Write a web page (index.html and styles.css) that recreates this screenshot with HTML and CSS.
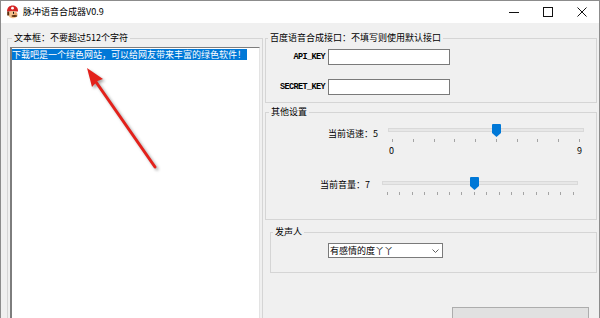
FILE: index.html
```html
<!DOCTYPE html>
<html lang="zh-CN">
<head>
    <meta charset="UTF-8">
    <meta name="viewport" content="width=device-width, initial-scale=1.0">
    <title>脉冲语音合成器V0.9</title>
    <link rel="stylesheet" href="styles.css">
</head>
<body>

    <div class="window">
        <div class="titlebar">
            <svg class="app-icon" viewBox="0 0 13 14">
                <path d="M1 6.5 C1 2.5 3.5 0.5 6.5 0.5 C9.5 0.5 12 2.5 12 5.5 L12 6.5 Z" fill="#d42424"/>
                <circle cx="6.5" cy="3.2" r="1.4" fill="#fff"/>
                <ellipse cx="7" cy="9.6" rx="4.6" ry="3.6" fill="#f4c18c"/>
                <rect x="1.2" y="6.5" width="2" height="4" fill="#5a2d0c"/>
                <ellipse cx="8.4" cy="11" rx="3" ry="1.1" fill="#5a2d0c"/>
                <circle cx="9.6" cy="8.8" r="1.3" fill="#ee9c66"/>
                <rect x="7" y="6.8" width="1" height="2" fill="#111"/>
            </svg>
            <span class="title">脉冲语音合成器V0.9</span>
            <div class="controls">
                <span class="ctl"><svg width="10" height="10"><line x1="0" y1="5.5" x2="10" y2="5.5" stroke="#111"/></svg></span>
                <span class="ctl"><svg width="10" height="10"><rect x="0.5" y="0.5" width="9" height="9" fill="none" stroke="#111"/></svg></span>
                <span class="ctl"><svg width="10" height="10"><path d="M0.5 0.5 L9.5 9.5 M9.5 0.5 L0.5 9.5" stroke="#111"/></svg></span>
            </div>
        </div>

        <div class="content">
            <fieldset class="group text-group">
                <legend>文本框：不要超过512个字符</legend>
                <div class="textbox"><span class="selected">下载吧是一个绿色网站，可以给网友带来丰富的绿色软件！</span></div>
            </fieldset>

            <div class="side">
                <fieldset class="group api-group">
                    <legend>百度语音合成接口：不填写则使用默认接口</legend>
                    <div class="key-grid">
                        <label class="key-label">API_KEY</label>
                        <input class="key-input" type="text">
                        <label class="key-label">SECRET_KEY</label>
                        <input class="key-input" type="text">
                    </div>
                </fieldset>

                <fieldset class="group other-group">
                    <legend>其他设置</legend>
                    <div class="slider-row speed-row">
                        <span class="slider-label">当前语速：5</span>
                        <div class="slider">
                            <div class="track"></div>
                            <svg class="thumb" style="left: 104px" viewBox="0 0 9 13"><path d="M1 0 H8 Q9 0 9 1 V9 L4.5 13 L0 9 V1 Q0 0 1 0 Z" fill="#0078d7"/></svg>
                            <div class="ticks">
                                <span></span><span></span><span></span><span></span><span></span>
                                <span></span><span></span><span></span><span></span><span></span>
                            </div>
                            <div class="scale"><span>0</span><span>9</span></div>
                        </div>
                    </div>
                    <div class="slider-row volume-row">
                        <span class="slider-label">当前音量：7</span>
                        <div class="slider">
                            <div class="track"></div>
                            <svg class="thumb" style="left: 88px" viewBox="0 0 9 13"><path d="M1 0 H8 Q9 0 9 1 V9 L4.5 13 L0 9 V1 Q0 0 1 0 Z" fill="#0078d7"/></svg>
                            <div class="ticks volume-ticks">
                                <span></span><span></span><span></span><span></span>
                                <span></span><span></span><span></span><span></span>
                                <span></span><span></span><span></span><span></span>
                                <span></span><span></span><span></span><span></span>
                            </div>
                        </div>
                    </div>
                </fieldset>

                <fieldset class="group voice-group">
                    <legend>发声人</legend>
                    <div class="combo">
                        <span>有感情的度丫丫</span>
                        <svg width="7" height="4"><polyline points="0.5,0.5 3.5,3.5 6.5,0.5" fill="none" stroke="#606060"/></svg>
                    </div>
                </fieldset>

                <button class="run-button"></button>
            </div>
        </div>

        <svg class="arrow" width="90" height="115" viewBox="0 0 90 115">
            <line x1="75" y1="107" x2="16" y2="22" stroke="#e3211b" stroke-width="3" stroke-linecap="round"/>
            <path d="M7 8 L23 19 L17.5 21 L12 27 Z" fill="#e3211b"/>
        </svg>
    </div>

</body>
</html>
```

FILE: styles.css
```css
body {
    margin: 0;
    background-color: #f0f0f0;
    font-family: "Noto Sans CJK SC", sans-serif;
    font-size: 9px;
    color: #000;
}
.window {
    position: relative;
    width: 600px;
    height: 318px;
    box-sizing: border-box;
    border: 1px solid #8c8c8c;
    border-bottom: none;
    background-color: #f0f0f0;
    overflow: hidden;
}
.titlebar {
    height: 22px;
    background-color: #fff;
    display: flex;
    align-items: center;
}
.app-icon {
    width: 13px;
    height: 14px;
    margin-left: 5px;
}
.title {
    margin-left: 4px;
    line-height: 12px;
}
.controls {
    margin-left: auto;
    display: flex;
}
.ctl {
    width: 34px;
    height: 22px;
    display: flex;
    align-items: center;
    justify-content: center;
}
.content {
    display: flex;
    padding-top: 9px;
}
.group {
    margin: 0;
    padding: 0;
    min-width: 0;
    box-sizing: border-box;
    border: 1px solid #d5d5d5;
}
.group legend {
    padding: 0 2px;
    margin-left: 2px;
    line-height: 12px;
}
.text-group {
    margin-left: 6px;
    width: 256px;
    height: 330px;
    padding: 3px 0 0 2px;
}
.textbox {
    width: 250px;
    height: 300px;
    box-sizing: border-box;
    background-color: #fff;
    border: 1px solid #e3e3e3;
    border-left: 2px solid #7d7d7d;
    border-top-color: #7d7d7d;
}
.selected {
    display: inline-block;
    background-color: #0078d7;
    color: #fff;
    line-height: 11px;
    padding-right: 1px;
}
.side {
    margin-left: 2px;
    width: 332px;
    display: flex;
    flex-direction: column;
}
.api-group {
    padding: 5px 0 7px;
}
.key-grid {
    display: grid;
    grid-template-columns: 58px 122px;
    column-gap: 3px;
    row-gap: 14px;
    align-items: center;
    margin-left: 1px;
}
.key-label {
    justify-self: end;
    font-family: "Liberation Mono", monospace;
    font-size: 8.5px;
    font-weight: bold;
    letter-spacing: -0.6px;
}
.key-input {
    display: block;
    width: 122px;
    height: 16px;
    box-sizing: border-box;
    margin: 0;
    padding: 0;
    border: 1px solid #7a7a7a;
    background-color: #fff;
}
.other-group {
    margin-top: 3px;
    padding: 6px 0 24px;
}
.other-group legend {
    margin-left: 3px;
}
.slider-row {
    display: flex;
    align-items: flex-start;
}
.speed-row {
    padding-left: 62px;
    gap: 10px;
}
.volume-row {
    padding-left: 54px;
    gap: 12px;
    margin-top: 20px;
}
.slider-label {
    margin-top: 4px;
    line-height: 12px;
    white-space: nowrap;
}
.volume-row .slider-label {
    margin-top: 2px;
}
.slider {
    position: relative;
    width: 196px;
}
.track {
    margin-top: 4px;
    height: 4px;
    box-sizing: border-box;
    background-color: #e7e7e7;
    border: 1px solid #d9d9d9;
}
.thumb {
    position: absolute;
    top: 0;
    width: 9px;
    height: 13px;
}
.ticks {
    display: flex;
    justify-content: space-between;
    margin-top: 7px;
    padding: 0 4px;
}
.ticks span {
    width: 1px;
    height: 3px;
    background-color: #a4a4a4;
}
.volume-ticks {
    padding: 0 4px 0 5px;
}
.scale {
    display: flex;
    justify-content: space-between;
    margin-top: 3px;
    padding: 0 2px 0 1px;
    line-height: 12px;
}
.voice-group {
    margin: 6px 0 0 5px;
    padding: 5px 0 14px;
}
.combo {
    width: 115px;
    height: 15px;
    margin-left: 57px;
    box-sizing: border-box;
    border: 1px solid #7a7a7a;
    background-color: #fff;
    display: flex;
    align-items: center;
    justify-content: space-between;
    padding: 0 3px 0 1px;
    line-height: 12px;
}
.run-button {
    align-self: flex-end;
    margin: 34px 8px 0 0;
    width: 137px;
    height: 36px;
    border: 1px solid #adadad;
    background-color: #e1e1e1;
    font: inherit;
}
.arrow {
    position: absolute;
    left: 79px;
    top: 59px;
    filter: drop-shadow(2px 2px 1.5px rgba(0, 0, 0, 0.35));
}
```
